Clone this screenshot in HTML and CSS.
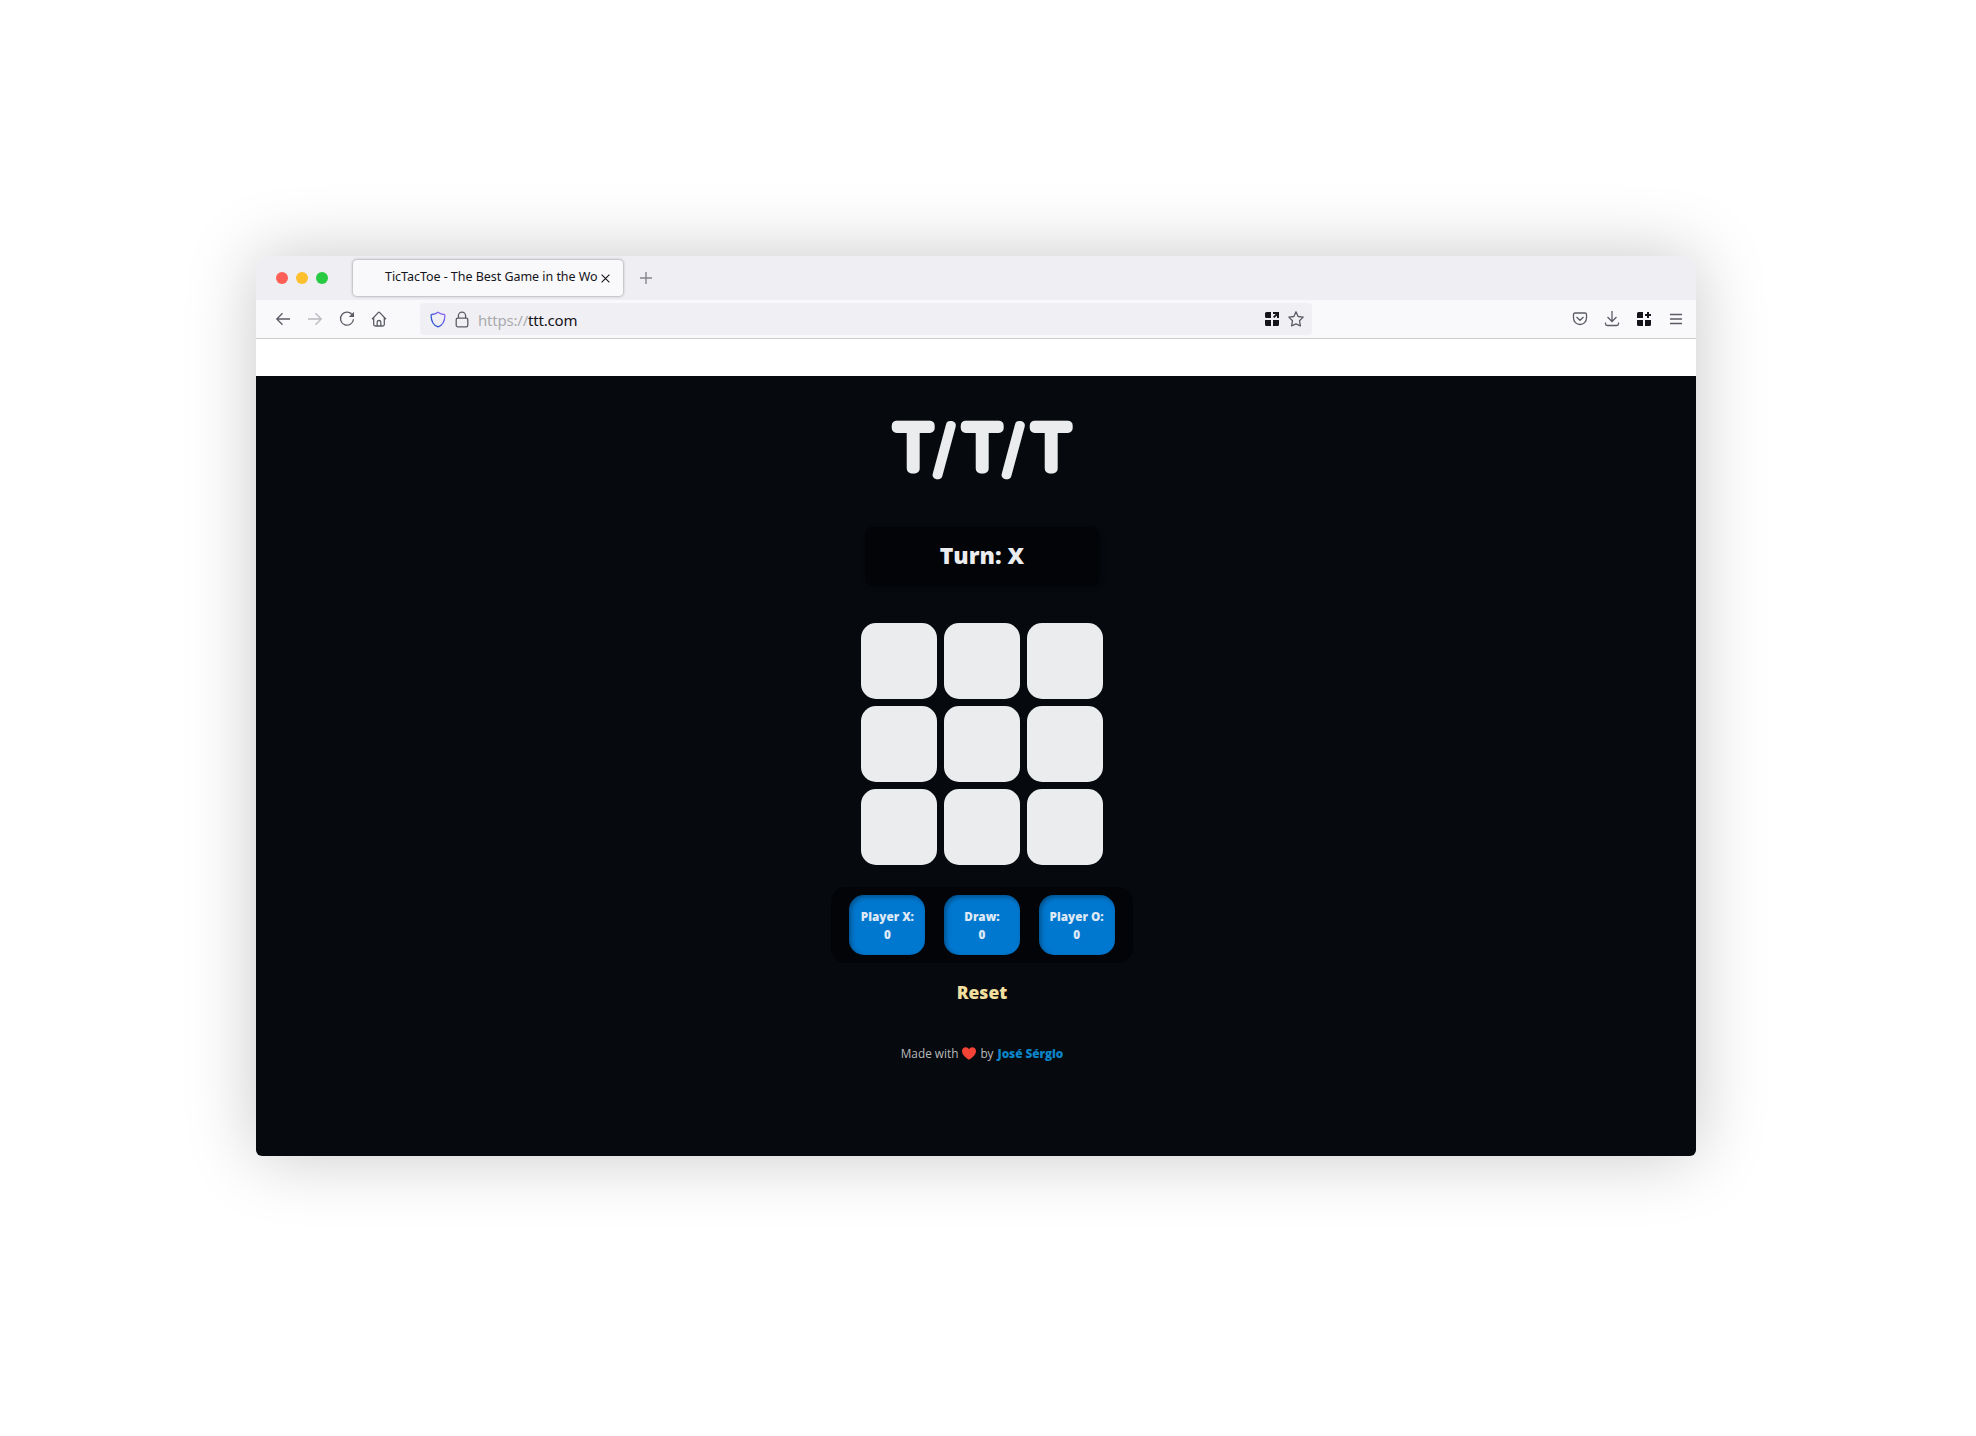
FILE: index.html
```html
<!DOCTYPE html>
<html lang="en">
<head>
<meta charset="utf-8">
<title>TicTacToe - The Best Game in the World</title>
<link rel="stylesheet" href="styles.css">
</head>
<body>
<div class="window">
  <div class="tabs">
    <div class="lights"><i class="red"></i><i class="yellow"></i><i class="green"></i></div>
    <div class="tab"><span class="tab-title">TicTacToe - The Best Game in the Wo</span>
      <svg class="close" width="9" height="9" viewBox="0 0 9 9"><path d="M.6.6l7.8 7.8M8.4.6L.6 8.4" stroke="#15141a" stroke-width="1.1"/></svg>
    </div>
    <svg class="plus" width="12" height="12" viewBox="0 0 12 12"><path d="M6 0v12M0 6h12" stroke="#85848c" stroke-width="1.4"/></svg>
  </div>
  <div class="toolbar">
    <div class="nav">
      <svg width="16" height="16" viewBox="0 0 16 16"><path d="M15 8H2M7.5 2.3L1.8 8l5.7 5.7"/></svg>
      <svg class="faded" width="16" height="16" viewBox="0 0 16 16"><path d="M1 8h13M8.5 2.3L14.2 8l-5.700 5.700"/></svg>
      <svg width="16" height="16" viewBox="0 0 16 16"><path d="M13.700 4.500A6.500 6.500 0 1 0 14.500 8.200"/><path class="solid" d="M15 .8v5.200H9.800z"/></svg>
      <svg width="16" height="16" viewBox="0 0 16 16"><path d="M1 8.200L7.200 1.600q.8-.8 1.600 0L15 8.200M2.700 6.800v6.700q0 1.500 1.500 1.500h7.600q1.500 0 1.500-1.500V6.800M6.200 15v-4q0-1.500 1.800-1.500T9.800 11v4"/></svg>
    </div>
    <div class="address">
      <svg width="16" height="17" viewBox="0 0 16 17"><defs><linearGradient id="shield" x1="0" y1="1" x2="1" y2="0"><stop offset=".3" stop-color="#3358d4"/><stop offset="1" stop-color="#a06cff"/></linearGradient></defs><path style="stroke:url(#shield)" d="M8 1.200C6.500 2.300 3.500 3.400 1.800 3.500q-.7.100-.7.900C1.200 9.500 3 14.200 8 15.800c5-1.600 6.800-6.300 6.900-11.400q0-.8-.7-.9C12.500 3.400 9.500 2.300 8 1.200z"/></svg>
      <svg class="lock" width="14" height="17" viewBox="0 0 14 17"><rect x="1.200" y="7.200" width="11.600" height="8.600" rx="1.600"/><path d="M3.400 7V4.700a3.600 3.600 0 0 1 7.200 0V7"/></svg>
      <span class="url"><span>https://</span>ttt.com</span>
      <svg class="grid-icon" width="15" height="15" viewBox="0 0 15 15"><path class="dark" d="M1.500 0H6v6H1.500Q0 6 0 4.500v-3Q0 0 1.500 0zM0 8h6v6H1.500Q0 14 0 12.500zM8 8h6v4.500q0 1.500-1.500 1.500H8zM8 0h6v6h-2V3.400L9.300 6 8 4.700 10.700 2H8z"/></svg>
      <svg width="16" height="16" viewBox="0 0 16 16"><path stroke-linejoin="round" d="M8 .8l2.100 4.700 5.100.6-3.700 3.600.9 5.200L8 12.800l-4.400 2.100.9-5.200L.8 6.100l5.100-.6z"/></svg>
    </div>
    <div class="tools">
      <svg width="16" height="16" viewBox="0 0 16 16"><path d="M3 2h10q1.500 0 1.500 1.500V7A6.500 6.500 0 0 1 1.500 7V3.500Q1.500 2 3 2zM4.500 6L8 9.300 11.500 6"/></svg>
      <svg width="16" height="16" viewBox="0 0 16 16"><path d="M8 0v10.500M3.500 6L8 10.500 12.500 6M1.500 11.500v1.200q0 1.800 1.800 1.800h9.400q1.800 0 1.800-1.800v-1.200"/></svg>
      <svg width="16" height="16" viewBox="0 0 16 16"><path class="dark" d="M2.500 1H7v6H1V2.500Q1 1 2.500 1zM1 9h6v6H2.500Q1 15 1 13.500zM9 9h6v4.500q0 1.500-1.500 1.500H9zM11 1h2v2h2v2h-2v2h-2V5H9V3h2z"/></svg>
      <svg width="16" height="16" viewBox="0 0 16 16"><path d="M2 3.500h12M2 8h12M2 12.500h12"/></svg>
    </div>
  </div>
  <div class="bookmarks"></div>
  <main class="page">
    <svg class="logo" width="200" height="70" viewBox="0 0 200 70"><text y="56"><tspan x="13.500">T</tspan><tspan class="slash" x="53">/</tspan><tspan x="82.500">T</tspan><tspan class="slash" x="122">/</tspan><tspan x="151.500">T</tspan></text></svg>
    <div class="turn">Turn: X</div>
    <div class="board"><i></i><i></i><i></i><i></i><i></i><i></i><i></i><i></i><i></i></div>
    <div class="scores">
      <div class="score"><span>Player X:</span><span>0</span></div>
      <div class="score"><span>Draw:</span><span>0</span></div>
      <div class="score"><span>Player O:</span><span>0</span></div>
    </div>
    <div class="reset">Reset</div>
    <div class="credit"><span>Made with</span><svg width="14" height="13" viewBox="0 0 14 13"><path d="M7 12.700C3.500 10.500 0 7.600 0 4.200 0 1.700 1.700.2 3.700.2 5.200.2 6.400 1 7 2.300 7.600 1 8.800.2 10.300.2c2 0 3.700 1.500 3.700 4 0 3.400-3.500 6.300-7 8.500z" fill="#f44336"/></svg><span>by</span><b>José Sérgio</b></div>
  </main>
</div>
</body>
</html>
```
FILE: styles.css
```css
* { box-sizing: border-box; }
body { margin: 0; min-height: 1436px; padding: 256px 280px 0 256px; background: #fff; font-family: "Noto Sans", sans-serif; }
.window { width: 1440px; height: 900px; display: flex; flex-direction: column; border-radius: 10px 10px 6px 6px; overflow: hidden; background: #fff; box-shadow: 0 0 70px rgba(0,0,0,.22); }
svg { display: block; flex: none; }
.tabs { height: 44px; background: #efeef3; display: flex; align-items: center; padding-left: 20px; }
.lights { display: flex; gap: 8px; width: 77px; }
.lights i { width: 12px; height: 12px; border-radius: 50%; }
.red { background: #ff5f57; }
.yellow { background: #febf2e; }
.green { background: #28ca42; }
.tab { width: 270px; height: 36px; border-radius: 4px; background: #f9f9fb; box-shadow: 0 0 3px rgba(0,0,0,.45); display: flex; align-items: center; padding: 0 13px 3px 32px; justify-content: space-between; color: #15141a; font-size: 12.5px; }
.tab-title { white-space: nowrap; width: 214px; letter-spacing: -.04px; }
.close { margin-top: 4px; }
.plus { margin-left: 17px; }
.toolbar { height: 39px; background: #f9f9fb; border-bottom: 1px solid #cccccf; display: flex; align-items: center; }
.toolbar svg { fill: none; stroke: #5b5b66; stroke-width: 1.3; }
.toolbar .solid { fill: #5b5b66; stroke: none; }
.toolbar .dark { fill: #15141a; stroke: none; }
.nav { display: flex; gap: 16px; padding-left: 19px; width: 164px; }
.nav .faded { opacity: .4; }
.address { width: 892px; height: 32px; border-radius: 4px; background: #f0f0f4; display: flex; align-items: center; padding: 0 8px 0 10px; }
.lock { margin-left: 9px; }
.url { margin-left: 9px; font-size: 15px; letter-spacing: -.2px; color: #15141a; flex: 1; padding-top: 1px; }
.url span { color: #aaaaae; }
.grid-icon { margin-right: 8px; }
.tools { display: flex; gap: 16px; margin-left: auto; padding-right: 12px; }
.bookmarks { height: 37px; }
.page { flex: 1; background: #06090e; display: flex; flex-direction: column; align-items: center; padding: 37px 0 0 12px; color: #ebecee; font-family: "Open Sans", sans-serif; }
.logo text { font: 200 58px "DejaVu Sans", sans-serif; fill: #ebecee; stroke: #ebecee; stroke-width: 10px; stroke-linejoin: round; }
.logo .slash { font: 100 57px Inter, sans-serif; stroke-width: 8.5px; }
.turn { width: 234px; height: 59px; margin-top: 43.5px; border-radius: 8px; background: #020408; box-shadow: 2px 2px 4px rgba(0,4,4,.3); display: flex; align-items: center; justify-content: center; font-weight: 800; font-size: 23px; padding-bottom: 3px; }
.board { margin-top: 37.2px; display: grid; grid-template-columns: repeat(3, 76px); grid-auto-rows: 76px; gap: 7.4px; }
.board i { background: #ebecee; border-radius: 15px; }
.scores { width: 302px; height: 76px; margin-top: 22px; border-radius: 15px; background: #020408; display: flex; justify-content: center; align-items: center; gap: 18.600px; }
.score { width: 76px; height: 60px; border-radius: 15px; background: #0078d0; box-shadow: inset 2px 2px 5px rgba(0,0,0,.35); display: flex; flex-direction: column; align-items: center; justify-content: center; font-weight: 800; font-size: 11.7px; line-height: 18px; color: #dfe9f5; white-space: nowrap; padding-bottom: 1px; }
.reset { margin-top: 16.5px; font-weight: 800; font-size: 17.5px; line-height: 24px; color: #f1df9e; }
.credit { margin-top: 40.5px; display: flex; align-items: center; font-size: 11.8px; line-height: 18px; gap: 4px; color: #b9babd; white-space: nowrap; }
.credit b { color: #0c84c8; font-weight: 800; letter-spacing: -.05px; }
```
